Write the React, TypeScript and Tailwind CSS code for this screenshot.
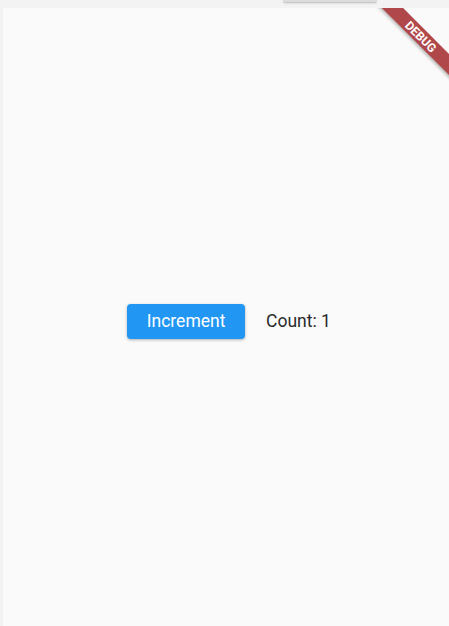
// Counter screen — an increment button beside the current count,
// with the debug ribbon in the top-right corner.

import { useState } from "react";

export default function App() {
  const [count, setCount] = useState(1);

  return (
    <div
      className="relative flex h-[626px] w-[449px] flex-col overflow-hidden bg-[#f3f3f3] pl-[3px] pt-2"
      style={{ fontFamily: "Roboto, 'Noto Sans', sans-serif" }}
    >
      {/* Grey tab peeking in at the top edge */}
      <div className="absolute left-[283px] top-0 h-[2px] w-[94px] rounded-b-sm bg-[#dcdcdc] shadow-[0_1px_2px_rgba(0,0,0,0.25)]" />

      <div className="relative flex flex-1 items-center justify-center overflow-hidden bg-[#fafafa] pl-[6px] pt-[9px]">
        <div className="flex items-center gap-[21px]">
          <button
            onClick={() => setCount((c) => c + 1)}
            className="h-[35px] w-[118px] rounded-[4px] bg-[#2196f3] text-[17.5px] text-white shadow-[0_1px_3px_rgba(0,0,0,0.3)]"
          >
            Increment
          </button>
          <span className="text-[17.5px] text-[#2a2a2a]">Count: {count}</span>
        </div>

        {/* DEBUG banner */}
        <div className="absolute right-[-27px] top-[21px] flex h-[15px] w-[110px] rotate-45 items-center justify-center bg-[#b0484b] shadow-[0_2px_3px_rgba(0,0,0,0.25)]">
          <span className="text-[12px] font-bold leading-none text-white">
            DEBUG
          </span>
        </div>
      </div>
    </div>
  );
}
